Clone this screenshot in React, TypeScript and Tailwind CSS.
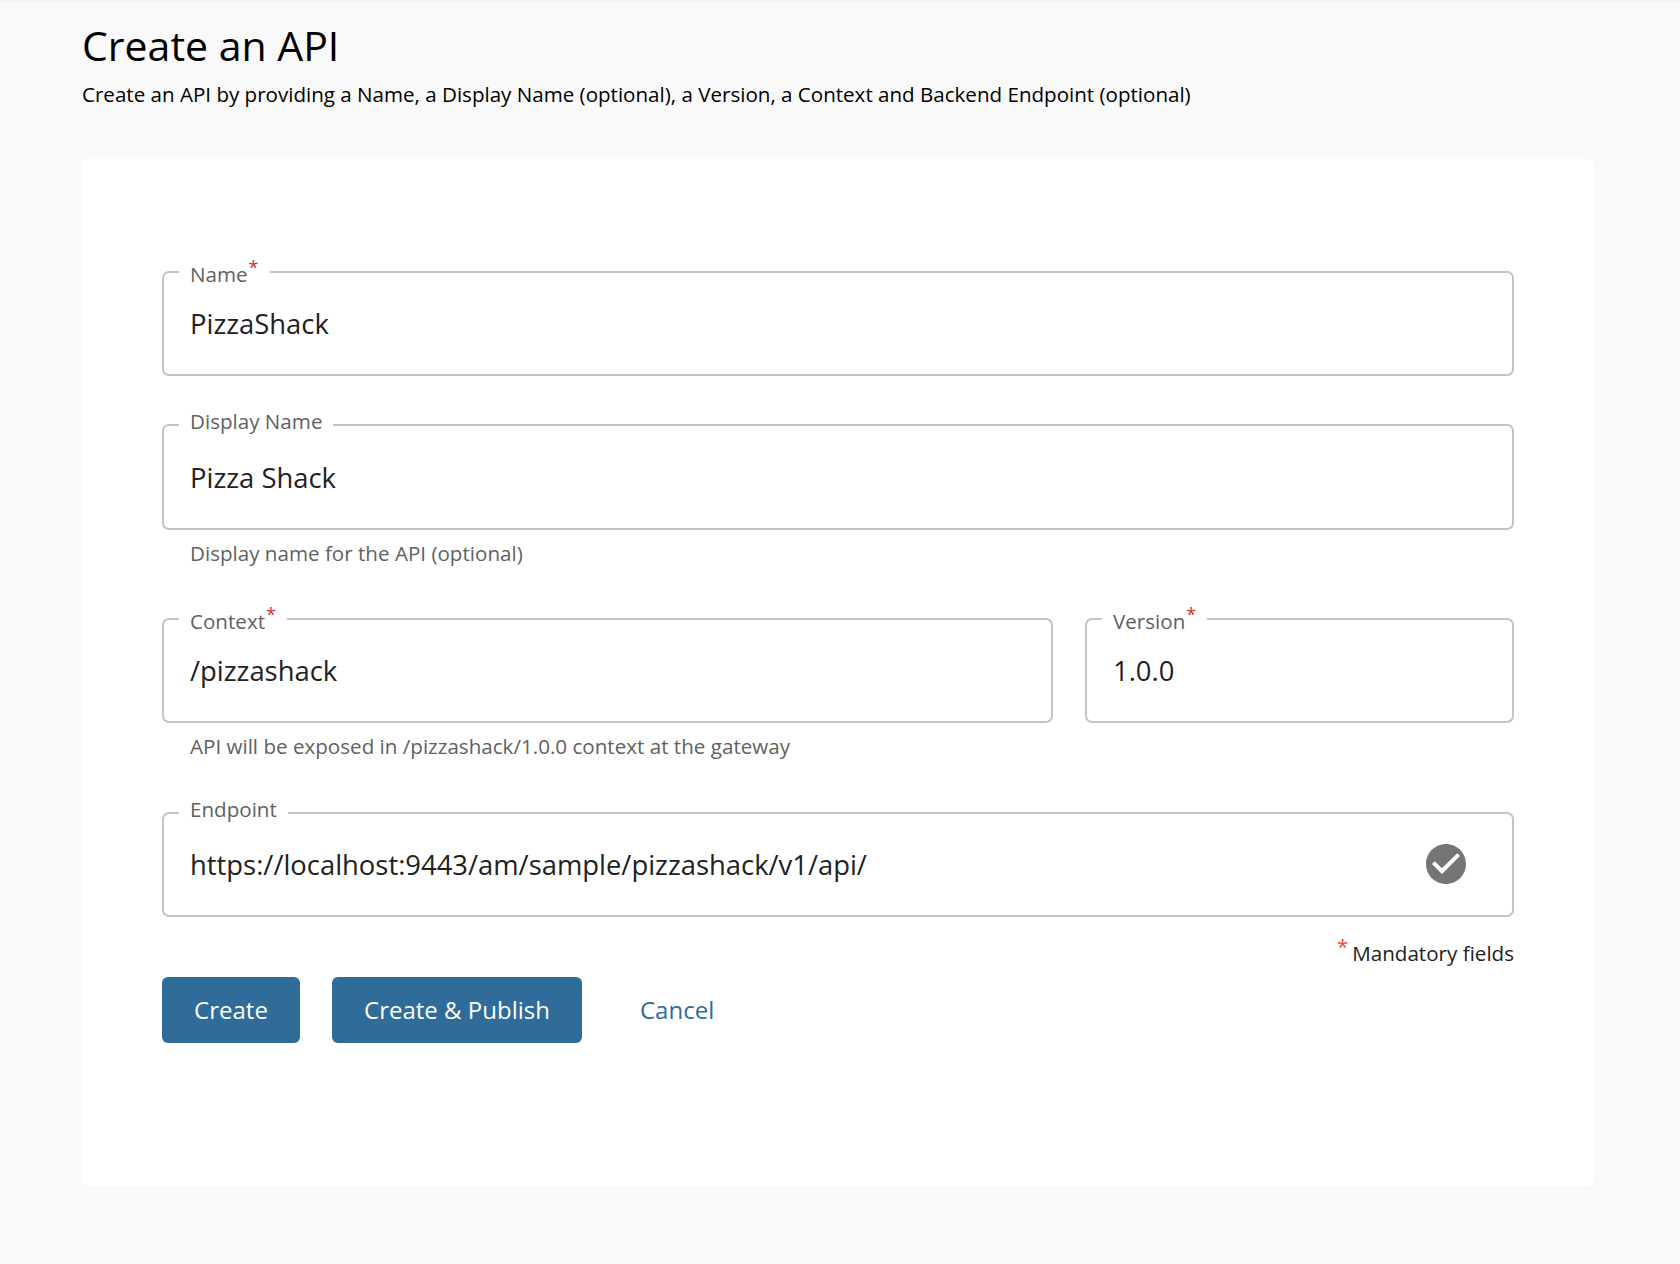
import React from "react";

const font = { fontFamily: '"Open Sans", sans-serif' };

function Field({
  label,
  value,
  required,
  className = "",
  heightClass = "h-[116px]",
  bodyClass = "h-[80px]",
  icon,
}: {
  label: string;
  value: string;
  required?: boolean;
  className?: string;
  heightClass?: string;
  bodyClass?: string;
  icon?: React.ReactNode;
}) {
  return (
    <fieldset className={`border-2 border-[#c4c4c4] rounded-[7px] ${heightClass} min-w-0 px-[26px] pb-[10px] ${className}`}>
      <legend className="ml-[-11px] px-[11px] h-[24px] text-[20.6px] leading-[24px] text-[#616161] whitespace-nowrap">
        {required ? (
          <span className="relative top-[2px]">
            {label}
            <span className="relative top-[-8px] ml-[1px] text-[18px] text-[#d32f2f]">*</span>
          </span>
        ) : (
          <span className="relative top-[-4px]">{label}</span>
        )}
      </legend>
      <div className={`flex items-center justify-between ${bodyClass}`}>
        <span className="text-[27.4px] text-[#212121] leading-[36px]">{value}</span>
        {icon}
      </div>
    </fieldset>
  );
}

function Helper({ children, className = "" }: { children: React.ReactNode; className?: string }) {
  return <p className={`text-[20.6px] leading-[24px] text-[#616161] pl-[28px] ${className}`}>{children}</p>;
}

export default function App() {
  return (
    <div style={font} className="min-h-[1264px] bg-[#f9f9f9]">
      <div className="h-[3px] bg-gradient-to-b from-[#f0f0f0] to-[#f9f9f9]" />
      <div className="pl-[82px] pr-[86px]">
        <h1 className="mt-[18px] text-[41px] leading-[48px] text-black">Create an API</h1>
        <p className="mt-[10px] text-[20.57px] leading-[30px] text-black">
          Create an API by providing a Name, a Display Name (optional), a Version, a Context and Backend Endpoint (optional)
        </p>
        <div className="mt-[50px] bg-white rounded-[6px] px-[80px] pt-[101px] pb-[143px]">
          <Field label="Name" value="PizzaShack" required />
          <Field label="Display Name" value="Pizza Shack" className="mt-[37px]" heightClass="h-[117px]" bodyClass="h-[82px]" />
          <Helper className="mt-[11px]">Display name for the API (optional)</Helper>
          <div className="mt-[42px] flex gap-[32px]">
            <Field label="Context" value="/pizzashack" required className="flex-1" />
            <Field label="Version" value="1.0.0" required className="w-[429px]" />
          </div>
          <Helper className="mt-[11px]">API will be exposed in /pizzashack/1.0.0 context at the gateway</Helper>
          <Field
            label="Endpoint"
            value="https://localhost:9443/am/sample/pizzashack/v1/api/"
            className="mt-[43px]"
            icon={
              <svg viewBox="0 0 24 24" className="w-[48px] h-[48px] mr-[16px] mb-[2px] fill-[#757575]">
                <path d="M12 2C6.48 2 2 6.48 2 12s4.48 10 10 10 10-4.48 10-10S17.52 2 12 2zm-2 15l-5-5 1.41-1.41L10 14.17l7.59-7.59L19 8l-9 9z" />
              </svg>
            }
          />
          <p className="mt-[24px] text-right text-[20.6px] leading-[24px] text-[#212121]">
            <span className="relative top-[-7px] mr-[4px] text-[#f44336]">*</span>
            Mandatory fields
          </p>
          <div className="mt-[12px] flex items-center">
            <button className="h-[66px] w-[138px] rounded-[6px] bg-[#306c99] text-white text-[24px]">Create</button>
            <button className="ml-[32px] h-[66px] w-[250px] rounded-[6px] bg-[#306c99] text-white text-[24px]">Create &amp; Publish</button>
            <button className="ml-[32px] h-[66px] px-[26px] text-[#306c99] text-[24px]">Cancel</button>
          </div>
        </div>
      </div>
    </div>
  );
}
